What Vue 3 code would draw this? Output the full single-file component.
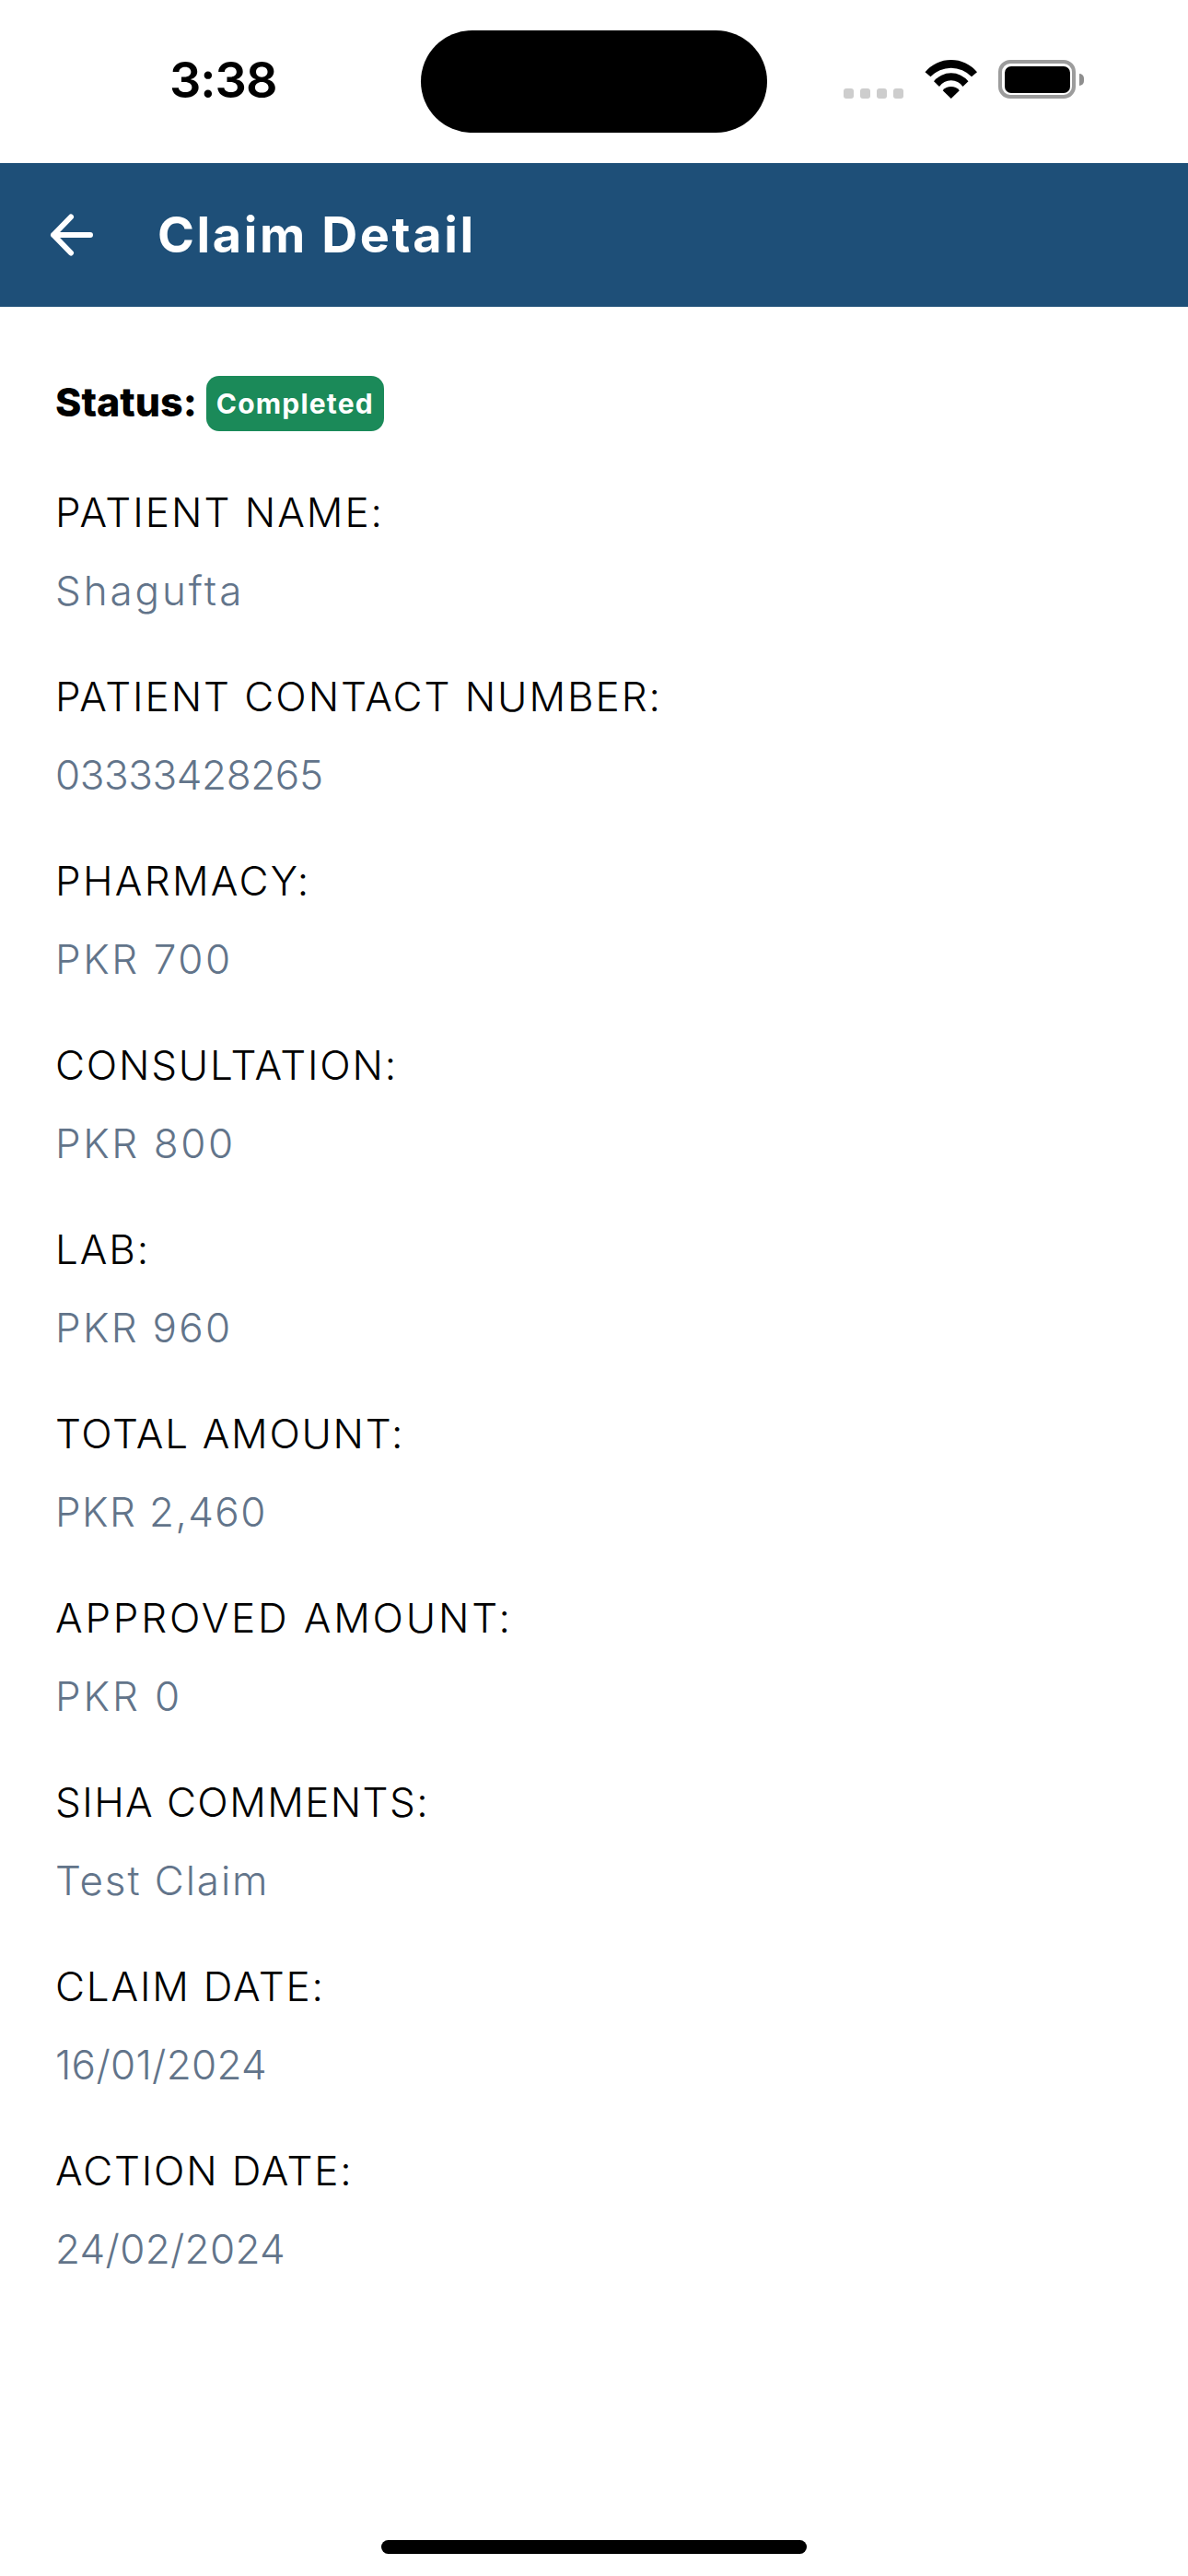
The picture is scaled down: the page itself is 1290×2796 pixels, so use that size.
<script setup>
const rows = [
  { label: 'PATIENT NAME:', value: 'Shagufta', labelSpacing: 2, spacing: 2.9 },
  { label: 'PATIENT CONTACT NUMBER:', value: '03333428265', labelSpacing: 1.95, spacing: -0.4 },
  { label: 'PHARMACY:', value: 'PKR 700', labelSpacing: 2.3, spacing: 2.6 },
  { label: 'CONSULTATION:', value: 'PKR 800', labelSpacing: 1.8, spacing: 2.6 },
  { label: 'LAB:', value: 'PKR 960', labelSpacing: 1.9, spacing: 2.3 },
  { label: 'TOTAL AMOUNT:', value: 'PKR 2,460', labelSpacing: 1.7, spacing: 1.4 },
  { label: 'APPROVED AMOUNT:', value: 'PKR 0', labelSpacing: 2.8, spacing: 2.9 },
  { label: 'SIHA COMMENTS:', value: 'Test Claim', labelSpacing: 1.4, spacing: 1.9 },
  { label: 'CLAIM DATE:', value: '16/01/2024', labelSpacing: 1.8, spacing: 0.3 },
  { label: 'ACTION DATE:', value: '24/02/2024', labelSpacing: 1.8, spacing: 0.3 }
]
</script>

<template>
  <div class="screen">
    <div class="statusbar">
      <span class="time">3:38</span>
      <div class="island"></div>
      <div class="signal">
        <i></i><i></i><i></i><i></i>
      </div>
      <svg class="wifi" width="58" height="42" viewBox="0 0 58 42">
        <path d="M0.5 13.3A36.7 36.7 0 0 1 57 13.3L51 18.3A30.6 30.6 0 0 0 6.5 18.3Z" />
        <path d="M10 23.3A24 24 0 0 1 47.5 23.3L41.5 29A15.5 15.5 0 0 0 16 29Z" />
        <path d="M19.7 33.3A11.6 11.6 0 0 1 37.8 33.3L28.75 42Z" />
      </svg>
      <div class="battery"><div class="charge"></div></div>
      <div class="nub"></div>
    </div>

    <header class="appbar">
      <svg class="back" width="48" height="48" viewBox="0 0 48 48">
        <path d="M44 24H4M23 4.5L4 24L23 43.5" />
      </svg>
      <h1 class="title">Claim Detail</h1>
    </header>

    <main class="content">
      <div class="status">
        <span class="status-label">Status:</span>
        <span class="badge">Completed</span>
      </div>
      <div v-for="row in rows" :key="row.label" class="row">
        <div class="label" :style="{ letterSpacing: row.labelSpacing + 'px' }">{{ row.label }}</div>
        <div class="value" :style="{ letterSpacing: row.spacing + 'px' }">{{ row.value }}</div>
      </div>
    </main>

    <div class="home"></div>
  </div>
</template>

<style scoped>
.screen {
  width: 1290px;
  height: 2796px;
  background: #fff;
  display: flex;
  flex-direction: column;
  font-family: Inter, "Liberation Sans", sans-serif;
  overflow: hidden;
}
.statusbar {
  height: 177px;
  flex: none;
  display: flex;
  align-items: flex-start;
  box-sizing: border-box;
}
.time {
  margin: 46px 0 0 184px;
  width: 273px;
  font-size: 54px;
  line-height: 82px;
  font-weight: 600;
  color: #000;
  letter-spacing: -1px;
}
.island {
  margin-top: 33px;
  width: 376px;
  height: 111px;
  border-radius: 56px;
  background: #000;
}
.signal {
  margin: 96px 0 0 83px;
  display: flex;
  gap: 7px;
}
.signal i {
  display: block;
  width: 11px;
  height: 11px;
  border-radius: 3px;
  background: #cdcdcd;
}
.wifi {
  margin: 65px 0 0 23px;
  fill: #000;
}
.battery {
  margin: 65px 0 0 22px;
  width: 84px;
  height: 42px;
  box-sizing: border-box;
  border: 4px solid #9c9c9c;
  border-radius: 13px;
  padding: 2.5px;
}
.charge {
  width: 100%;
  height: 100%;
  background: #000;
  border-radius: 7px;
}
.nub {
  margin: 80px 0 0 4px;
  width: 5px;
  height: 13px;
  background: #8e8e8e;
  border-radius: 0 5px 5px 0;
}
.appbar {
  height: 156px;
  flex: none;
  background: #1e4f78;
  display: flex;
  align-items: center;
  padding-left: 54px;
  box-sizing: border-box;
}
.back {
  flex: none;
  fill: none;
  stroke: #fff;
  stroke-width: 6;
  stroke-linecap: round;
  stroke-linejoin: round;
}
.title {
  margin: 0 0 0 69px;
  font-size: 54px;
  line-height: 70px;
  font-weight: 700;
  color: #fff;
  letter-spacing: 2.6px;
}
.content {
  flex: 1;
  padding: 0 60px;
}
.status {
  margin-top: 75px;
  height: 64px;
  display: flex;
  align-items: flex-start;
  gap: 10px;
}
.status-label {
  font-size: 43px;
  line-height: 56px;
  font-weight: 800;
  color: #000;
}
.badge {
  height: 60px;
  width: 193px;
  display: flex;
  align-items: center;
  justify-content: center;
  border-radius: 14px;
  background: #1b8a59;
  color: #fff;
  font-size: 30px;
  font-weight: 700;
  letter-spacing: 1.2px;
}
.status + .row {
  margin-top: 54px;
}
.row {
  height: 200px;
}
.label {
  font-size: 44px;
  line-height: 60px;
  font-weight: 300;
  color: #000;
}
.value {
  margin-top: 25px;
  font-size: 44px;
  line-height: 60px;
  font-weight: 300;
  color: #62748a;
}
.home {
  position: absolute;
  left: 414px;
  top: 2757px;
  width: 462px;
  height: 15px;
  border-radius: 8px;
  background: #000;
}
</style>

<style>
html, body { margin: 0; background: #fff; }
</style>
